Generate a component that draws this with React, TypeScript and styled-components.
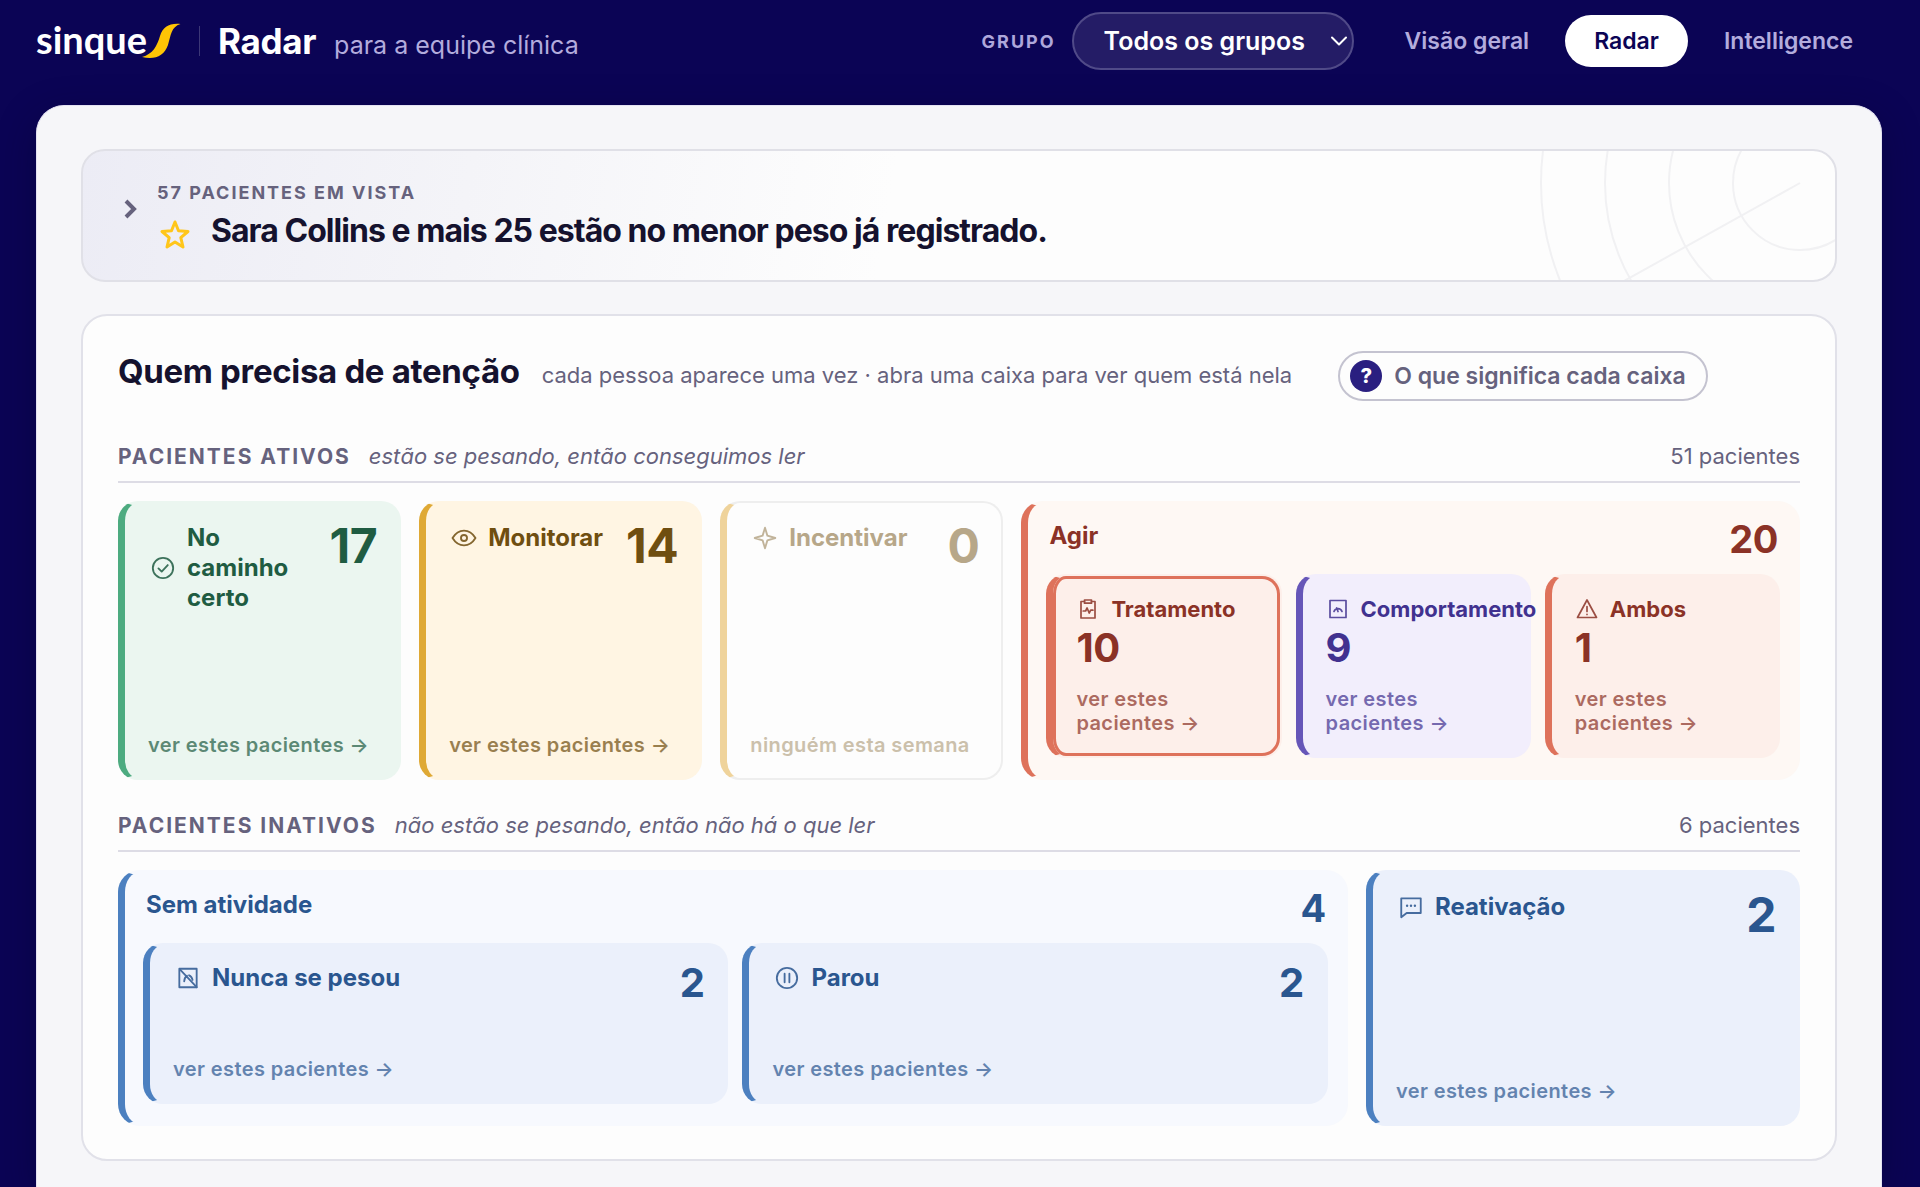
import React from "react";
import styled, { createGlobalStyle, css } from "styled-components";

const GlobalStyle = createGlobalStyle`
  *, *::before, *::after { box-sizing: border-box; }
  body {
    margin: 0;
    background: #0b0455;
    font-family: Inter, "Liberation Sans", sans-serif;
    color: #15122e;
  }
  h1, h2, h3, p { margin: 0; }
  button, select { font-family: inherit; }
`;

/* ---------- tones ---------- */

const tones = {
  green: { bar: "#4dab80", bg: "#ebf6f0", group: "#f6fbf8", text: "#1f5c42" },
  amber: { bar: "#dfa935", bg: "#fff5e3", group: "#fffaf1", text: "#6f4e10" },
  muted: { bar: "#efd39b", bg: "#fdfdfd", group: "#fdfdfd", text: "#b7a789" },
  red: { bar: "#de725b", bg: "#fdefea", group: "#fef8f4", text: "#8b3226" },
  violet: { bar: "#6656b8", bg: "#f2eefc", group: "#f9f7fe", text: "#41318f" },
  blue: { bar: "#4c80c0", bg: "#ebf0fb", group: "#f7f9fe", text: "#2a568f" },
};
type Tone = keyof typeof tones;

/* ---------- header ---------- */

const Page = styled.div`
  min-height: 100vh;
  display: flex;
  flex-direction: column;
`;

const Header = styled.header`
  display: flex;
  align-items: center;
  justify-content: space-between;
  height: 82px;
  padding: 0 38px 0 36px;
`;

const Brand = styled.div`
  display: flex;
  align-items: center;
  gap: 18px;
`;

const Logo = styled.a`
  display: flex;
  align-items: flex-end;
  color: #fff;
  text-decoration: none;
  font: 700 38px/40px Lato, "Open Sans", sans-serif;
`;

const Wordmark = styled.span`
  padding-bottom: 4px;
`;

const Swoosh = styled.svg`
  width: 40px;
  height: 36px;
  margin: 0 0 4px -6px;
`;

const Divider = styled.span`
  width: 1px;
  height: 30px;
  background: #3c3777;
`;

const BrandText = styled.div`
  display: flex;
  align-items: baseline;
  gap: 18px;
`;

const Product = styled.h1`
  font-size: 35px;
  line-height: 44px;
  font-weight: 700;
  letter-spacing: -0.01em;
  color: #fff;
`;

const Audience = styled.span`
  font-size: 25px;
  color: #b3acdd;
`;

const Controls = styled.div`
  display: flex;
  align-items: center;
`;

const GroupLabel = styled.label`
  margin-right: 16px;
  font-size: 18px;
  font-weight: 700;
  letter-spacing: 2px;
  color: #aea7db;
`;

const SelectWrap = styled.div`
  position: relative;
  display: flex;
  margin-right: 22px;
`;

const Select = styled.select`
  appearance: none;
  height: 58px;
  padding: 0 46px 0 30px;
  border: 2px solid #504a88;
  border-radius: 29px;
  background: #241c66;
  color: #fff;
  font-size: 25px;
  font-weight: 600;
`;

const SelectArrow = styled.svg`
  position: absolute;
  right: 6px;
  top: 20px;
  width: 18px;
  height: 18px;
  pointer-events: none;
`;

const Nav = styled.nav`
  display: flex;
  align-items: center;
  gap: 7px;
`;

const NavLink = styled.a<{ $active?: boolean }>`
  padding: 0 29px;
  line-height: 52px;
  border-radius: 26px;
  font-size: 23px;
  font-weight: 600;
  text-decoration: none;
  color: ${(p) => (p.$active ? "#0b0455" : "#b3acdd")};
  background: ${(p) => (p.$active ? "#fff" : "transparent")};
`;

/* ---------- sheet ---------- */

const Sheet = styled.main`
  flex: 1;
  display: flex;
  flex-direction: column;
  gap: 32px;
  margin: 23px 38px 0 36px;
  padding: 43px 44px 26px;
  border: 1px solid #e4e2f2;
  border-bottom: 0;
  border-radius: 28px 28px 0 0;
  background: #f6f6f9;
  box-shadow: 0 12px 40px rgba(0, 0, 30, 0.3);
`;

const Banner = styled.section`
  position: relative;
  display: flex;
  align-items: center;
  gap: 18px;
  height: 133px;
  padding: 0 36px;
  overflow: hidden;
  border: 2px solid #e0e0e7;
  border-radius: 24px;
  background: linear-gradient(100deg, #ececf5 0%, #f4f4f8 22%, #fdfdfd 46%);
`;

const Toggle = styled.button`
  display: flex;
  padding: 0;
  border: 0;
  background: none;
  margin-bottom: 14px;
`;

const BannerBody = styled.div`
  flex: 1;
  padding-top: 2px;
`;

const Eyebrow = styled.p`
  margin-bottom: 4px;
  font-size: 18px;
  line-height: 24px;
  font-weight: 700;
  letter-spacing: 2px;
  color: #66627d;
`;

const Headline = styled.h2`
  display: flex;
  align-items: center;
  gap: 18px;
  font-size: 32px;
  line-height: 44px;
  font-weight: 700;
  letter-spacing: -0.03em;
  color: #15122e;

  svg {
    margin-top: 6px;
  }
`;

const Rings = styled.svg`
  position: absolute;
  right: 0;
  top: 0;
  width: 320px;
  height: 129px;
`;

/* ---------- attention panel ---------- */

const Panel = styled.section`
  padding: 33px 35px;
  border: 2px solid #e1e1e9;
  border-radius: 26px;
  background: #fdfdfd;
`;

const PanelHead = styled.div`
  display: flex;
  align-items: baseline;
  gap: 22px;
  padding-bottom: 39px;
`;

const PanelTitle = styled.h2`
  font-size: 33px;
  line-height: 44px;
  font-weight: 700;
  letter-spacing: -0.01em;
`;

const PanelHint = styled.p`
  margin-right: 24px;
  font-size: 22px;
  line-height: 32px;
  color: #66627d;
`;

const HelpButton = styled.button`
  display: flex;
  align-items: center;
  gap: 12px;
  height: 50px;
  padding: 0 20px 0 10px;
  border: 2px solid #c4c3d0;
  border-radius: 25px;
  background: #fdfdfd;
  color: #66627d;
  font-size: 23px;
  font-weight: 600;
`;

const HelpMark = styled.span`
  width: 32px;
  line-height: 32px;
  border-radius: 50%;
  background: #2a1f80;
  color: #fff;
  font-size: 20px;
  font-weight: 800;
  text-align: center;
`;

const RowHead = styled.div`
  display: flex;
  align-items: baseline;
  gap: 18px;
  padding-bottom: 8px;
  margin-bottom: 18px;
  border-bottom: 2px solid #dddce5;
  line-height: 32px;
  font-size: 22px;
  color: #66627d;
`;

const RowTitle = styled.h3`
  font-size: 21px;
  font-weight: 700;
  letter-spacing: 2px;
`;

const RowNote = styled.em`
  flex: 1;
`;

const Row = styled.div<{ $cols: string; $min: number }>`
  display: grid;
  grid-template-columns: ${(p) => p.$cols};
  gap: 18px;
  min-height: ${(p) => p.$min}px;

  & + div {
    margin-top: 29px;
  }
`;

const boxBase = css<{ $tone: Tone; $empty?: boolean }>`
  border: 2px solid ${(p) => (p.$empty ? "#eeeeee" : "transparent")};
  border-left: 7px solid ${(p) => tones[p.$tone].bar};
  color: ${(p) => tones[p.$tone].text};
`;

const Box = styled.button<{ $tone: Tone; $empty?: boolean; $selected?: boolean; $tight?: boolean }>`
  ${boxBase}
  display: flex;
  flex-direction: column;
  justify-content: space-between;
  min-width: 0;
  padding: ${(p) => (p.$tight ? 18 : 20)}px 22px 21px 23px;
  border-radius: 20px;
  background: ${(p) => tones[p.$tone].bg};
  box-shadow: ${(p) => (p.$selected ? `inset 0 0 0 3px ${tones[p.$tone].bar}` : "none")};
  text-align: left;
`;

const BoxTop = styled.span<{ $stacked?: boolean }>`
  display: flex;
  flex-direction: ${(p) => (p.$stacked ? "column" : "row")};
  align-items: flex-start;
  justify-content: space-between;
  gap: ${(p) => (p.$stacked ? 4 : 16)}px;
`;

const BoxName = styled.span<{ $small?: boolean }>`
  display: flex;
  align-items: center;
  gap: 11px;
  padding-left: ${(p) => (p.$small ? 0 : 2)}px;
  font-size: ${(p) => (p.$small ? 22 : 24)}px;
  line-height: 30px;
  font-weight: 700;

  svg {
    flex: none;
    width: ${(p) => (p.$small ? 24 : 26)}px;
    height: ${(p) => (p.$small ? 24 : 26)}px;
    opacity: 0.85;
  }
`;

const countSizes = { lg: [48, 46], md: [40, 40], sm: [38, 40] };

const Count = styled.span<{ $size: keyof typeof countSizes }>`
  font-size: ${(p) => countSizes[p.$size][0]}px;
  line-height: ${(p) => countSizes[p.$size][1]}px;
  font-weight: 700;
  letter-spacing: -0.01em;
`;

const BoxLink = styled.span`
  font-size: 20px;
  line-height: 24px;
  font-weight: 600;
  letter-spacing: 0.02em;
  opacity: 0.7;
`;

const Group = styled.div<{ $tone: Tone }>`
  ${boxBase}
  display: flex;
  flex-direction: column;
  gap: 15px;
  min-width: 0;
  padding: 16px 18px 20px;
  border-radius: 22px;
  background: ${(p) => tones[p.$tone].group};
`;

const GroupHead = styled.div`
  display: flex;
  justify-content: space-between;
  padding: 0 2px 0 3px;
  font-size: 24px;
  line-height: 34px;
  font-weight: 700;
`;

const GroupGrid = styled.div<{ $count: number }>`
  flex: 1;
  display: grid;
  grid-template-columns: repeat(${(p) => p.$count}, minmax(0, 1fr));
  gap: 14px;
`;

/* ---------- icons ---------- */

const Icon = ({ children, w = 1.7 }: { children: React.ReactNode; w?: number }) => (
  <svg viewBox="0 0 24 24" fill="none" stroke="currentColor" strokeWidth={w} strokeLinecap="round" strokeLinejoin="round" aria-hidden="true">
    {children}
  </svg>
);

const CheckIcon = () => (
  <Icon>
    <circle cx="12" cy="12" r="9.4" />
    <path d="M7.800 12.400l3 2.900 5.600-6" />
  </Icon>
);
const EyeIcon = () => (
  <Icon>
    <path d="M1.400 12C4.200 7.400 8 5.200 12 5.200s7.800 2.200 10.600 6.800c-2.800 4.600-6.600 6.800-10.600 6.800S4.200 16.600 1.400 12z" />
    <circle cx="12" cy="12" r="2.800" />
  </Icon>
);
const SparkIcon = () => (
  <Icon>
    <path d="M12 2.500l2.200 7.300 7.300 2.200-7.300 2.200-2.200 7.300-2.200-7.300-7.300-2.200 7.300-2.200z" />
  </Icon>
);
const ClipboardIcon = () => (
  <Icon>
    <path d="M8.500 4.500H5v16.500h14v-16.500h-3.500" />
    <path d="M8.500 3h7v3.200h-7z" />
    <path d="M7.200 14h2.400l1.500-3 2.100 5 1.500-2.800h2.200" />
  </Icon>
);
const ScaleIcon = () => (
  <Icon>
    <path d="M4 3.500h16v17H4z" />
    <path d="M8 14.500a4.200 4.200 0 0 1 8 0M12 14.500l-1.400-3.500" />
  </Icon>
);
const ScaleOffIcon = () => (
  <Icon>
    <path d="M4 3.500h16v17H4z" />
    <path d="M4.500 4l15.500 16.500M8.500 15c.2-2.600 1.200-4.200 2.600-5M13 9.500c1.800.7 2.800 2.200 3.200 4.300" />
  </Icon>
);
const WarnIcon = () => (
  <Icon>
    <path d="M12 3L21.500 20.500H2.500z" />
    <path d="M12 9.500v5M12 17.400v.1" />
  </Icon>
);
const PauseIcon = () => (
  <Icon>
    <circle cx="12" cy="12" r="9.400" />
    <path d="M9.800 8v8M14.200 8v8" />
  </Icon>
);
const ChatIcon = () => (
  <Icon>
    <path d="M3 4h18v13.500H8L3 21.500z" />
    <path d="M8.400 10.700v.1M12 10.700v.1M15.600 10.700v.1" strokeWidth="2.200" />
  </Icon>
);

/* ---------- box component ---------- */

interface PatientBoxProps {
  tone: Tone;
  icon: React.ReactNode;
  name: string;
  count: number;
  size?: "lg" | "md";
  stacked?: boolean;
  empty?: boolean;
  selected?: boolean;
}

const PatientBox = ({ tone, icon, name, count, size = "md", stacked, empty, selected }: PatientBoxProps) => (
  <Box
    type="button"
    $tone={tone}
    $empty={empty}
    $selected={selected}
    $tight={size === "md"}
    aria-pressed={!!selected}
  >
    <BoxTop $stacked={stacked}>
      <BoxName $small={stacked}>
        {icon}
        <span>{name}</span>
      </BoxName>
      <Count $size={size}>{count}</Count>
    </BoxTop>
    <BoxLink>{empty ? "ninguém esta semana" : "ver estes pacientes →"}</BoxLink>
  </Box>
);

export default function App() {
  return (
    <Page>
      <GlobalStyle />
      <Header>
        <Brand>
          <Logo href="#">
            <Wordmark>sinque</Wordmark>
            <Swoosh viewBox="0 0 40 36" aria-hidden="true">
              <path d="M39.500 1C28 0 22 4 19 13C16 23 12 31 1 34C14 37 23 33 27 22C30 12 30 4 39.500 1z" fill="#ffc505" />
            </Swoosh>
          </Logo>
          <Divider />
          <BrandText>
            <Product>Radar</Product>
            <Audience>para a equipe clínica</Audience>
          </BrandText>
        </Brand>
        <Controls>
          <GroupLabel htmlFor="grupo">GRUPO</GroupLabel>
          <SelectWrap>
            <Select id="grupo">
              <option>Todos os grupos</option>
            </Select>
            <SelectArrow viewBox="0 0 18 18" fill="none" stroke="#fff" strokeWidth="2" strokeLinecap="round" strokeLinejoin="round">
              <path d="M2 5.500l7 7 7-7" />
            </SelectArrow>
          </SelectWrap>
          <Nav>
            <NavLink href="#">Visão geral</NavLink>
            <NavLink href="#" $active>Radar</NavLink>
            <NavLink href="#">Intelligence</NavLink>
          </Nav>
        </Controls>
      </Header>

      <Sheet>
        <Banner>
          <Rings viewBox="0 0 320 129" fill="none" stroke="#f1f1f3" strokeWidth="2" aria-hidden="true">
            <circle cx="285" cy="32" r="67" />
            <circle cx="285" cy="32" r="131" />
            <circle cx="285" cy="32" r="195" />
            <circle cx="285" cy="32" r="259" />
            <path d="M285 32L109 130" />
          </Rings>
          <Toggle type="button" aria-label="Expandir">
            <svg width="20" height="20" viewBox="0 0 20 20" fill="none" stroke="#66627d" strokeWidth="4">
              <path d="M7 2l8 8-8 8" />
            </svg>
          </Toggle>
          <BannerBody>
            <Eyebrow>57 PACIENTES EM VISTA</Eyebrow>
            <Headline>
              <svg width="36" height="36" viewBox="0 0 36 36" fill="none" stroke="#ffc61a" strokeWidth="3" strokeLinejoin="round" aria-hidden="true">
                <path d="M18 6l3.500 8.800 9.500.700-7.200 6.200 2.200 9.300-8-5-8 5 2.200-9.300L5 15.500l9.500-.700z" />
              </svg>
              Sara Collins e mais 25 estão no menor peso já registrado.
            </Headline>
          </BannerBody>
        </Banner>

        <Panel>
          <PanelHead>
            <PanelTitle>Quem precisa de atenção</PanelTitle>
            <PanelHint>cada pessoa aparece uma vez · abra uma caixa para ver quem está nela</PanelHint>
            <HelpButton type="button">
              <HelpMark>?</HelpMark>
              O que significa cada caixa
            </HelpButton>
          </PanelHead>

          <RowHead>
            <RowTitle>PACIENTES ATIVOS</RowTitle>
            <RowNote>estão se pesando, então conseguimos ler</RowNote>
            <span>51 pacientes</span>
          </RowHead>
          <Row $cols="repeat(3, minmax(0, 4fr)) minmax(0, 11fr)" $min={279}>
            <PatientBox tone="green" icon={<CheckIcon />} name="No caminho certo" count={17} size="lg" />
            <PatientBox tone="amber" icon={<EyeIcon />} name="Monitorar" count={14} size="lg" />
            <PatientBox tone="muted" icon={<SparkIcon />} name="Incentivar" count={0} size="lg" empty />
            <Group $tone="red">
              <GroupHead>
                <span>Agir</span>
                <Count $size="sm">20</Count>
              </GroupHead>
              <GroupGrid $count={3}>
                <PatientBox tone="red" icon={<ClipboardIcon />} name="Tratamento" count={10} stacked selected />
                <PatientBox tone="violet" icon={<ScaleIcon />} name="Comportamento" count={9} stacked />
                <PatientBox tone="red" icon={<WarnIcon />} name="Ambos" count={1} stacked />
              </GroupGrid>
            </Group>
          </Row>

          <RowHead>
            <RowTitle>PACIENTES INATIVOS</RowTitle>
            <RowNote>não estão se pesando, então não há o que ler</RowNote>
            <span>6 pacientes</span>
          </RowHead>
          <Row $cols="minmax(0, 17fr) minmax(0, 6fr)" $min={256}>
            <Group $tone="blue">
              <GroupHead>
                <span>Sem atividade</span>
                <Count $size="sm">4</Count>
              </GroupHead>
              <GroupGrid $count={2}>
                <PatientBox tone="blue" icon={<ScaleOffIcon />} name="Nunca se pesou" count={2} />
                <PatientBox tone="blue" icon={<PauseIcon />} name="Parou" count={2} />
              </GroupGrid>
            </Group>
            <PatientBox tone="blue" icon={<ChatIcon />} name="Reativação" count={2} size="lg" />
          </Row>
        </Panel>
      </Sheet>
    </Page>
  );
}
